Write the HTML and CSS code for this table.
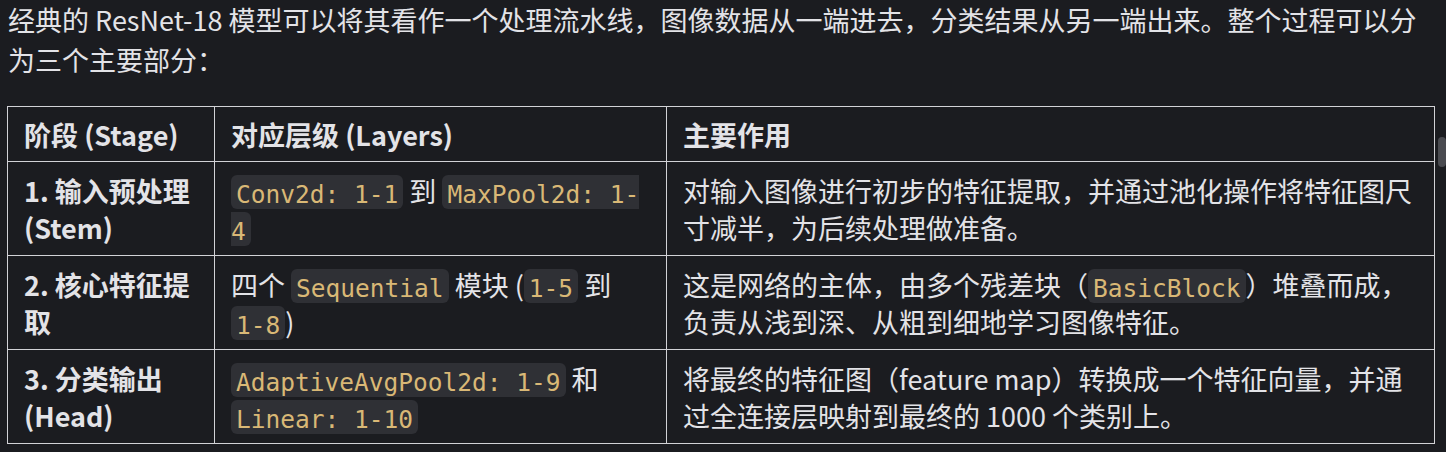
FILE: index.html
```html
<!DOCTYPE html>
<html lang="zh-CN">
<head>
<meta charset="utf-8">
<title>ResNet-18</title>
<link rel="stylesheet" href="styles.css">
</head>
<body>
<div class="page">
  <p class="intro">经典的 ResNet-18 模型可以将其看作一个处理流水线，图像数据从一端进去，分类结果从另一端出来。整个过程可以分为三个主要部分：</p>
  <table class="stages">
    <colgroup>
      <col class="c1">
      <col class="c2">
      <col class="c3">
    </colgroup>
    <thead>
      <tr>
        <th>阶段 (Stage)</th>
        <th>对应层级 (Layers)</th>
        <th>主要作用</th>
      </tr>
    </thead>
    <tbody>
      <tr>
        <td class="stage">1. 输入预处理 (Stem)</td>
        <td><code>Conv2d: 1-1</code> 到 <code>MaxPool2d: 1-4</code></td>
        <td>对输入图像进行初步的特征提取，并通过池化操作将特征图尺寸减半，为后续处理做准备。</td>
      </tr>
      <tr>
        <td class="stage">2. 核心特征提取</td>
        <td>四个 <code>Sequential</code> 模块 (<code>1-5</code> 到 <code>1-8</code>)</td>
        <td>这是网络的主体，由多个残差块（<code>BasicBlock</code>）堆叠而成，负责从浅到深、从粗到细地学习图像特征。</td>
      </tr>
      <tr>
        <td class="stage">3. 分类输出 (Head)</td>
        <td><code>AdaptiveAvgPool2d: 1-9</code> 和 <code>Linear: 1-10</code></td>
        <td>将最终的特征图（feature map）转换成一个特征向量，并通过全连接层映射到最终的 1000 个类别上。</td>
      </tr>
    </tbody>
  </table>
</div>
<div class="scroll-thumb"></div>
</body>
</html>
```
FILE: styles.css
```css
html, body {
  margin: 0;
  padding: 0;
  background: #1b1c20;
}
body {
  color: #e3e3e7;
  font-family: "Noto Sans CJK SC", "Noto Sans", sans-serif;
  font-size: 27px;
  overflow: hidden;
}
.page {
  padding: 0 11px 0 8px;
}
.intro {
  margin: 0 0 26px;
  line-height: 40px;
}
.stages {
  border-collapse: collapse;
  table-layout: fixed;
  width: 1428px;
  margin-left: -1px;
  line-height: 37px;
}
.c1 { width: 207px; }
.c2 { width: 452px; }
.c3 { width: 768px; }
.stages th,
.stages td {
  border: 1px solid #d2d2d6;
  text-align: left;
  vertical-align: top;
}
.stages th {
  font-weight: 700;
  padding: 9px 16px 8px;
}
.stages td {
  padding: 10px 16px 9px;
}
.stages td.stage {
  font-weight: 700;
}
code {
  font-family: "DejaVu Sans Mono", "Liberation Mono", monospace;
  font-size: 24.5px;
  line-height: 1;
  color: #d9b876;
  background: #2f3035;
  border-radius: 6px;
  padding: 4.5px 5px 1px;
}
.scroll-thumb {
  position: absolute;
  top: 137px;
  right: 0;
  width: 8px;
  height: 30px;
  border-radius: 4px;
  background: #4a4b50;
}
```
